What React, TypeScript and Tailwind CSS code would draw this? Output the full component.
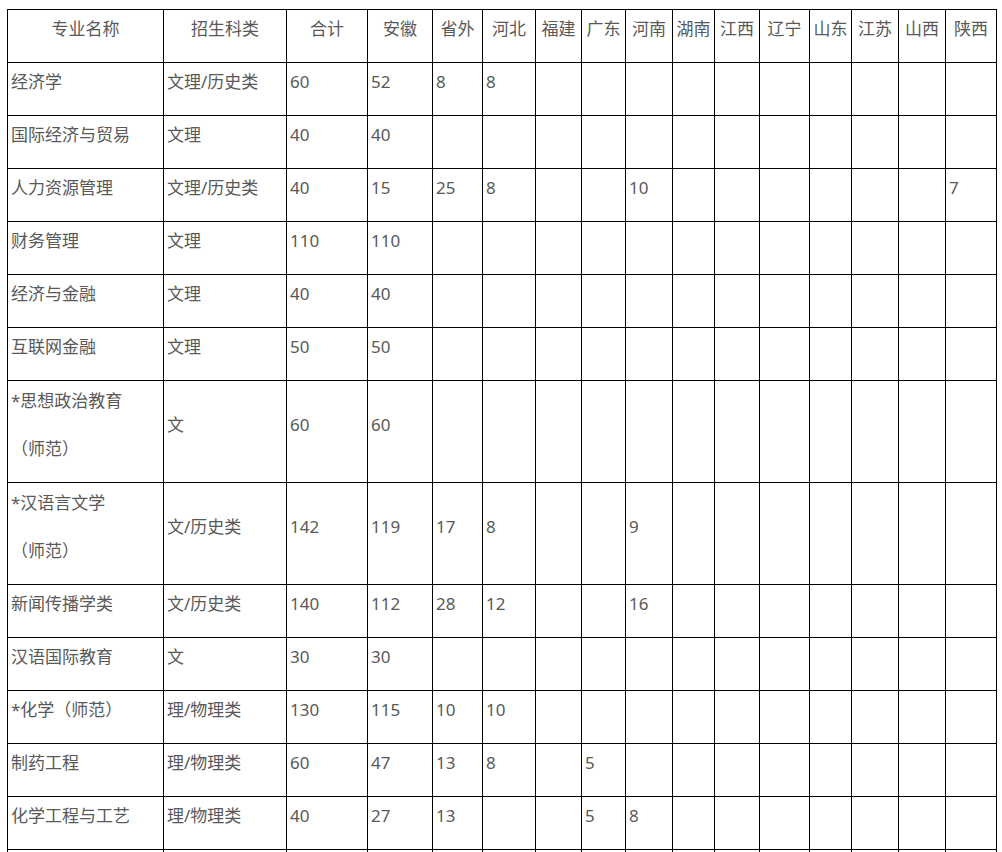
const widths = [156, 123, 81, 65, 50, 53, 46, 44, 47, 42, 45, 50, 42, 47, 47, 51];

const headers = ['专业名称', '招生科类', '合计', '安徽', '省外', '河北', '福建', '广东', '河南', '湖南', '江西', '辽宁', '山东', '江苏', '山西', '陕西'];

type Row = { name: string[]; cells: string[]; tall?: boolean };

const rows: Row[] = [
  { name: ['经济学'], cells: ['文理/历史类', '60', '52', '8', '8'] },
  { name: ['国际经济与贸易'], cells: ['文理', '40', '40'] },
  { name: ['人力资源管理'], cells: ['文理/历史类', '40', '15', '25', '8', '', '', '10', '', '', '', '', '', '', '7'] },
  { name: ['财务管理'], cells: ['文理', '110', '110'] },
  { name: ['经济与金融'], cells: ['文理', '40', '40'] },
  { name: ['互联网金融'], cells: ['文理', '50', '50'] },
  { name: ['*思想政治教育', '（师范）'], cells: ['文', '60', '60'], tall: true },
  { name: ['*汉语言文学', '（师范）'], cells: ['文/历史类', '142', '119', '17', '8', '', '', '9'], tall: true },
  { name: ['新闻传播学类'], cells: ['文/历史类', '140', '112', '28', '12', '', '', '16'] },
  { name: ['汉语国际教育'], cells: ['文', '30', '30'] },
  { name: ['*化学（师范）'], cells: ['理/物理类', '130', '115', '10', '10'] },
  { name: ['制药工程'], cells: ['理/物理类', '60', '47', '13', '8', '', '5'] },
  { name: ['化学工程与工艺'], cells: ['理/物理类', '40', '27', '13', '', '', '5', '8'] },
  { name: [''], cells: [] },
];

export default function App() {
  return (
    <div
      className="min-h-screen bg-white pl-[7px] pt-[9px] text-[17px] text-[#595959]"
      style={{ fontFamily: '"Noto Sans", "Noto Sans CJK SC", sans-serif' }}
    >
      <table className="table-fixed border-collapse w-[990px]">
        <colgroup>
          {widths.map((w, i) => (
            <col key={i} style={{ width: w }} />
          ))}
        </colgroup>
        <thead>
          <tr>
            {headers.map((h) => (
              <th
                key={h}
                className="h-[53px] border border-black p-0 pb-[14px] text-center align-middle font-normal leading-[24px] whitespace-nowrap"
              >
                {h}
              </th>
            ))}
          </tr>
        </thead>
        <tbody>
          {rows.map((r, ri) => (
            <tr key={ri}>
              <td
                className={`${r.tall ? 'h-[102px]' : 'h-[53px]'} border border-black pl-[3px] pr-0 pt-0 pb-[14px] align-middle leading-[24px] whitespace-nowrap`}
              >
                <div className="flex flex-col gap-[24px]">
                  {r.name.map((n, i) => (
                    <span key={i}>{n}</span>
                  ))}
                </div>
              </td>
              {Array.from({ length: 15 }).map((_, ci) => (
                <td
                  key={ci}
                  className="border border-black pl-[3px] pr-0 pt-0 pb-[14px] align-middle leading-[24px] whitespace-nowrap"
                >
                  {r.cells[ci] ?? ''}
                </td>
              ))}
            </tr>
          ))}
        </tbody>
      </table>
    </div>
  );
}
